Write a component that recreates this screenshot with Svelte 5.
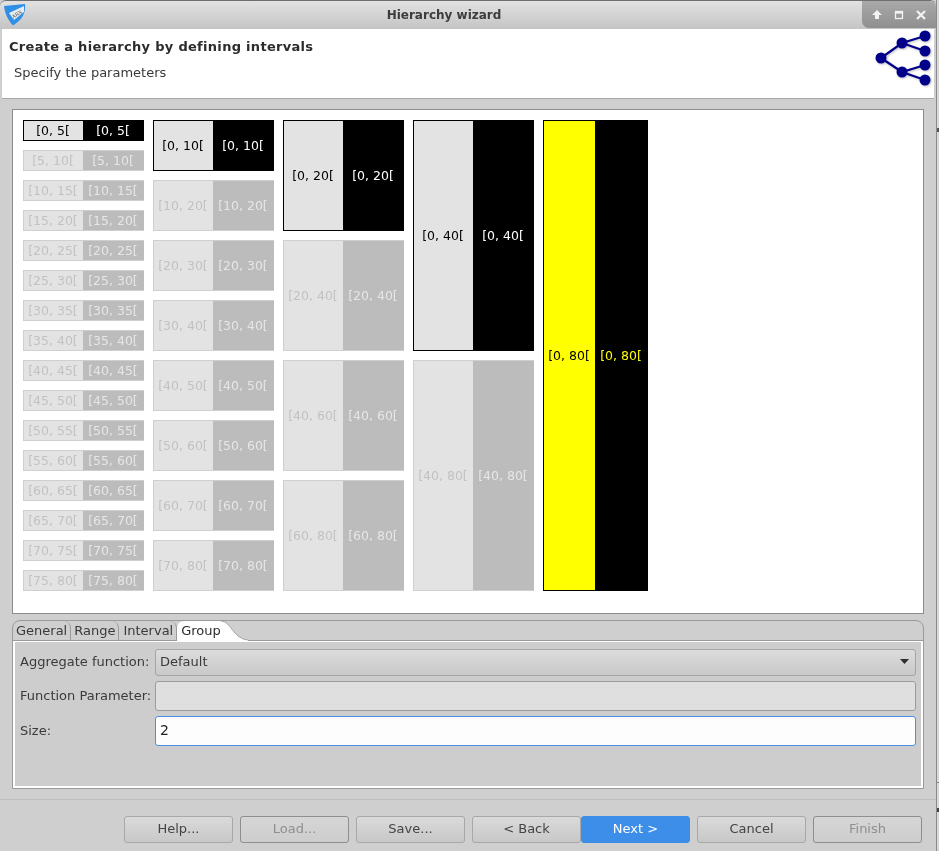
<script>
  // one column per hierarchy level, each interval twice as wide as the one before
  const levels = [5, 10, 20, 40, 80];
  const total = 80;

  function intervals(step) {
    const list = [];
    for (let start = 0; start < total; start += step) {
      list.push(`[${start}, ${start + step}[`);
    }
    return list;
  }

  const buttons = [
    { label: "Help..." },
    { label: "Load...", disabled: true },
    { label: "Save..." },
    { label: "< Back", joined: true },
    { label: "Next >", primary: true },
    { label: "Cancel" },
    { label: "Finish", disabled: true }
  ];

  const tabs = ["General", "Range", "Interval"];
</script>

<div class="desktop">
  <div class="window">
    <header class="titlebar">
      <svg class="app-icon" width="28" height="28" viewBox="0 0 28 28">
        <path d="M4 6 L25 4 C26 13 22 20 13 25.5 C8 20 5 14 4 6 Z" fill="#2f8fe6" />
        <path d="M9 13 L24 6 L24 12 L14 20 Z" fill="#e6ebee" />
        <text x="11" y="17" class="icon-text" transform="rotate(-32 15 14)">ARX</text>
      </svg>
      <span class="title">Hierarchy wizard</span>
      <div class="controls">
        <svg width="74" height="26" viewBox="0 0 74 26">
          <path d="M10 14 L15 9 L20 14 H17 V18 H13 V14 Z" fill="#f2f2f2" />
          <rect x="33.5" y="10.5" width="7" height="7" fill="none" stroke="#f2f2f2" stroke-width="1.3" />
          <rect x="34" y="11" width="6" height="1.6" fill="#f2f2f2" />
          <path d="M55 10 L63 18 M63 10 L55 18" stroke="#f2f2f2" stroke-width="2.2" />
        </svg>
      </div>
    </header>

    <section class="banner">
      <div>
        <h1>Create a hierarchy by defining intervals</h1>
        <p>Specify the parameters</p>
      </div>
      <svg class="tree" width="56" height="58" viewBox="0 0 56 58">
        <g stroke="#00008b" stroke-width="2.2" fill="none">
          <path d="M6 29 L27 14 L50 7 M27 14 L50 22 M6 29 L27 43 L50 36 M27 43 L50 51" />
        </g>
        <g fill="#00008b">
          <circle cx="6" cy="29" r="5.5" />
          <circle cx="27" cy="14" r="5.5" />
          <circle cx="27" cy="43" r="5.5" />
          <circle cx="50" cy="7" r="5.5" />
          <circle cx="50" cy="22" r="5.5" />
          <circle cx="50" cy="36" r="5.5" />
          <circle cx="50" cy="51" r="5.5" />
        </g>
      </svg>
    </section>

    <main class="body">
      <div class="preview">
        {#each levels as step, l}
          <div class="column" class:last={l === levels.length - 1}>
            {#each intervals(step) as label, i}
              <div class="cell" class:active={i === 0} class:top={l === levels.length - 1}>
                <span class="left">{label}</span>
                <span class="right">{label}</span>
              </div>
            {/each}
          </div>
        {/each}
      </div>

      <div class="folder">
        <div class="tabstrip">
          {#each tabs as tab}
            <span class="tab">{tab}</span>
          {/each}
          <span class="tab selected">
            Group
            <svg class="curve" width="27" height="20" viewBox="0 0 27 20">
              <path d="M0 0 C10 0 12 18 27 19 L27 20 L0 20 Z" fill="#fff" />
              <path d="M0 0 C10 0 12 18 27 19" fill="none" stroke="#a8a8a8" />
            </svg>
          </span>
        </div>
        <div class="pane">
          <div class="form">
            <span>Aggregate function:</span>
            <div class="combo">
              Default
              <svg width="9" height="5" viewBox="0 0 9 5"><path d="M0 0 H9 L4.5 5 Z" fill="#2e2e2e" /></svg>
            </div>
            <span>Function Parameter:</span>
            <div class="input readonly"></div>
            <span>Size:</span>
            <div class="input focused">2</div>
          </div>
        </div>
      </div>
    </main>

    <footer class="buttons">
      {#each buttons as button}
        <button class:primary={button.primary} class:joined={button.joined} disabled={button.disabled}>{button.label}</button>
      {/each}
    </footer>
  </div>
  <div class="behind"></div>
</div>

<style>
  :global(body) {
    background: #d8d8d8;
  }

  .desktop {
    width: 939px;
    height: 851px;
    display: flex;
    overflow: hidden;
  }

  .window {
    width: 937px;
    height: 851px;
    flex: none;
    box-sizing: border-box;
    display: flex;
    flex-direction: column;
    font-family: "DejaVu Sans", sans-serif;
    font-size: 13px;
    color: #3a3a3a;
    background: #cfcfcf;
    border-right: 1px solid #8a8a8a;
    opacity: 0.999;
  }

  .behind {
    flex: 1;
    background: linear-gradient(#d8d8d8 128px, #555 128px, #555 132px, #d8d8d8 132px, #d8d8d8 782px, #888 782px, #888 783px, #d8d8d8 783px, #d8d8d8 808px, #444 808px, #444 812px, #d8d8d8 812px);
  }

  .titlebar {
    height: 29px;
    flex: none;
    position: relative;
    display: flex;
    align-items: center;
    justify-content: center;
    padding-right: 48px;
    background: linear-gradient(#e2e2e2, #c4c4c4);
    border-top: 1px solid #6f6f6f;
    box-sizing: border-box;
    border-top-left-radius: 6px;
    border-top-right-radius: 6px;
  }

  .app-icon {
    position: absolute;
    left: 0;
    top: -1px;
  }

  .icon-text {
    font-size: 5px;
    font-family: "DejaVu Serif", serif;
    fill: #555;
  }

  .title {
    font-weight: bold;
    font-size: 12px;
    color: #3c3c3c;
  }

  .controls {
    position: absolute;
    right: 0;
    top: 0;
    width: 74px;
    height: 27px;
    background: linear-gradient(#a9a9a9, #8f8f8f);
    border-top-right-radius: 6px;
    border-bottom-left-radius: 7px;
  }

  .controls svg {
    display: block;
  }

  .banner {
    height: 70px;
    flex: none;
    margin: 0 2px;
    padding: 9px 3px 0 7px;
    box-sizing: border-box;
    background: #fff;
    border-bottom: 1px solid #a8a8a8;
    display: flex;
    justify-content: space-between;
    align-items: flex-start;
  }

  .banner h1 {
    margin: 0;
    font-size: 13px;
    line-height: 18px;
    font-weight: bold;
    color: #2c2c2c;
    letter-spacing: 0.3px;
  }

  .banner p {
    margin: 9px 0 0 5px;
    font-size: 13px;
    line-height: 16px;
    color: #3a3a3a;
  }

  .tree {
    margin-top: -9px;
    filter: drop-shadow(1px 1px 1px rgba(0, 0, 0, 0.25));
  }

  .body {
    flex: none;
    height: 701px;
    padding: 10px 12px 0 12px;
    box-sizing: border-box;
    border-bottom: 1px solid #bdbdbd;
  }

  .preview {
    height: 505px;
    box-sizing: border-box;
    background: #fff;
    border: 1px solid #8c8c8c;
    padding: 10px;
    display: flex;
    gap: 9px;
  }

  .column {
    width: 121px;
    height: 471px;
    display: flex;
    flex-direction: column;
    gap: 9px;
  }

  .column.last {
    width: 105px;
  }

  .cell {
    flex: 1;
    display: flex;
    box-sizing: border-box;
    font-size: 12.5px;
    border: 1px solid #cfcfcf;
    border-right: none;
    min-height: 0;
  }

  .cell span {
    display: flex;
    align-items: center;
    justify-content: center;
    white-space: nowrap;
    overflow: hidden;
    padding: 0 1px 1px 0;
    box-sizing: border-box;
  }

  .left {
    width: 59px;
    flex: none;
    background: #e3e3e3;
    color: #c2c2c2;
  }

  .right {
    flex: 1;
    background: #bcbcbc;
    color: #e6e6e6;
  }

  .cell.active {
    border-color: #000;
  }

  .cell.active .left {
    color: #000;
  }

  .cell.active .right {
    background: #000;
    color: #fff;
  }

  .cell.top .left {
    width: 51px;
    background: #ff0;
    color: #000;
  }

  .cell.top .right {
    background: #000;
    color: #ff0;
  }

  .folder {
    margin-top: 6px;
    height: 169px;
    box-sizing: border-box;
    display: flex;
    flex-direction: column;
    border-radius: 8px 8px 0 0;
    border: 1px solid #9a9a9a;
  }

  .tabstrip {
    height: 19px;
    flex: none;
    display: flex;
    align-items: stretch;
    border-bottom: 1px solid #9a9a9a;
  }

  .tab {
    padding: 0 3px;
    border-right: 1px solid #9a9a9a;
    border-radius: 0 7px 0 0;
    line-height: 19px;
    color: #3a3a3a;
  }

  .tab + .tab + .tab {
    padding-left: 4px;
  }

  .tab.selected {
    background: #fff;
    border: none;
    border-radius: 7px 0 0 0;
    position: relative;
    margin-bottom: -1px;
    color: #2c2c2c;
  }

  .curve {
    position: absolute;
    left: calc(100% - 3px);
    top: 0;
  }

  .pane {
    flex: 1;
    border: 2px solid #fff;
    border-top-width: 1px;
    background: #cdcdcd;
    padding: 7px 5px 0 5px;
    box-sizing: border-box;
  }

  .form {
    display: grid;
    grid-template-columns: 135px 1fr;
    grid-template-rows: 27px 30px 30px;
    row-gap: 5px;
    align-items: center;
  }

  .form > span {
    white-space: nowrap;
    padding-bottom: 2px;
  }

  .combo,
  .input {
    box-sizing: border-box;
    height: 100%;
    display: flex;
    align-items: center;
    justify-content: space-between;
    padding: 0 6px 2px 4px;
    border-radius: 3px;
    border: 1px solid #a5a5a5;
  }

  .combo {
    background: linear-gradient(#dcdcdc, #c9c9c9);
    color: #3a3a3a;
  }

  .input.readonly {
    background: #dfdfdf;
    border-color: #9c9c9c;
  }

  .input.focused {
    background: #fdfdfd;
    border-color: #4a90e2;
    color: #222;
    font-size: 14px;
  }

  .buttons {
    flex: 1;
    display: flex;
    justify-content: flex-end;
    gap: 7px;
    padding: 16px 14px 0 0;
  }

  button {
    width: 109px;
    height: 27px;
    padding: 0 0 2px 0;
    box-sizing: border-box;
    font: inherit;
    color: #444;
    background: linear-gradient(#dadada, #c8c8c8);
    border: 1px solid #a8a8a8;
    border-radius: 3px;
  }

  button:disabled {
    color: #8f8f8f;
    border-color: #8e8e8e;
    background: linear-gradient(#d6d6d6, #cdcdcd);
  }

  button.joined {
    margin-right: -7px;
  }

  button.primary {
    background: #3d8ee8;
    border-color: #3d8ee8;
    color: #fff;
  }
</style>
